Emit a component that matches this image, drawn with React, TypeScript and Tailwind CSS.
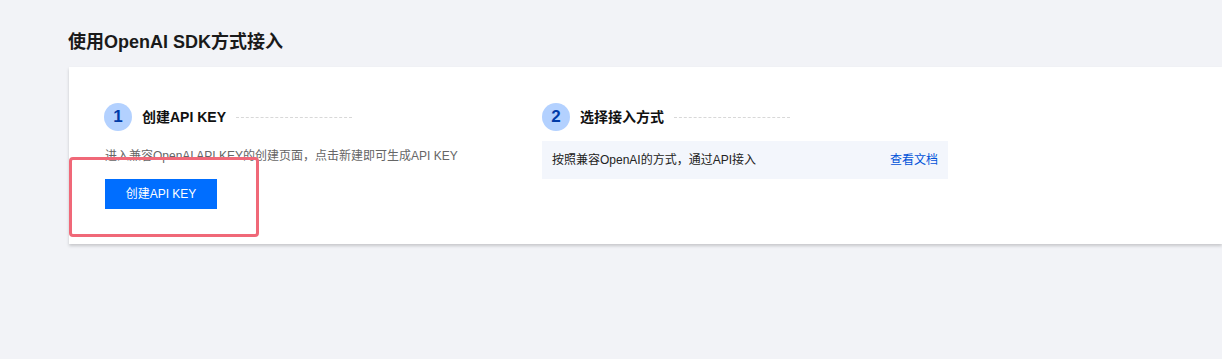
import React from 'react';

const font = "font-['Liberation_Sans','Noto_Sans_CJK_SC',sans-serif]";

interface StepHeadProps {
  num: number;
  title: string;
}

const StepHead: React.FC<StepHeadProps> = ({ num, title }) => (
  <div className="flex items-center h-[28px]">
    <div className="w-[28px] h-[28px] rounded-full bg-[#b3d1ff] text-[#003ba8] flex items-center justify-center text-[17px] font-bold">
      {num}
    </div>
    <span className="ml-[10px] text-[14px] font-bold text-[#111]">{title}</span>
    <div className="ml-[10px] w-[116px] border-t border-dashed border-[#d8d8d8]" />
  </div>
);

export default function App() {
  return (
    <div className={`${font} w-[1222px] h-[359px] bg-[#f2f3f7] overflow-hidden`}>
      <div className="pl-[68px] pt-[30px]">
        <h1 className="text-[18px] font-bold text-[#1a1a1a] leading-[24px]">使用OpenAI SDK方式接入</h1>
      </div>
      <div className="relative ml-[69px] mt-[13px] h-[177px] bg-white shadow-[0_2px_3px_rgba(0,0,0,0.18)]">
        <div className="flex pl-[35px] pt-[36px]">
          <div className="w-[438px]">
            <StepHead num={1} title="创建API KEY" />
            <p className="mt-[17px] ml-[1px] text-[12px] leading-[16px] text-[#666]">
              进入兼容OpenAI API KEY的创建页面，点击新建即可生成API KEY
            </p>
            <button className="mt-[15px] ml-[1px] w-[112px] h-[30px] bg-[#006eff] text-white text-[12px]">
              创建API KEY
            </button>
          </div>
          <div>
            <StepHead num={2} title="选择接入方式" />
            <div className="mt-[10px] w-[406px] h-[38px] bg-[#f3f6fc] flex items-center justify-between px-[10px] text-[12px]">
              <span className="text-[#222]">按照兼容OpenAI的方式，通过API接入</span>
              <span className="text-[#0052d9]">查看文档</span>
            </div>
          </div>
        </div>
        <div className="absolute left-0 top-[90px] w-[190px] h-[80px] border-[3px] border-[#f06878] rounded-[4px]" />
      </div>
    </div>
  );
}
